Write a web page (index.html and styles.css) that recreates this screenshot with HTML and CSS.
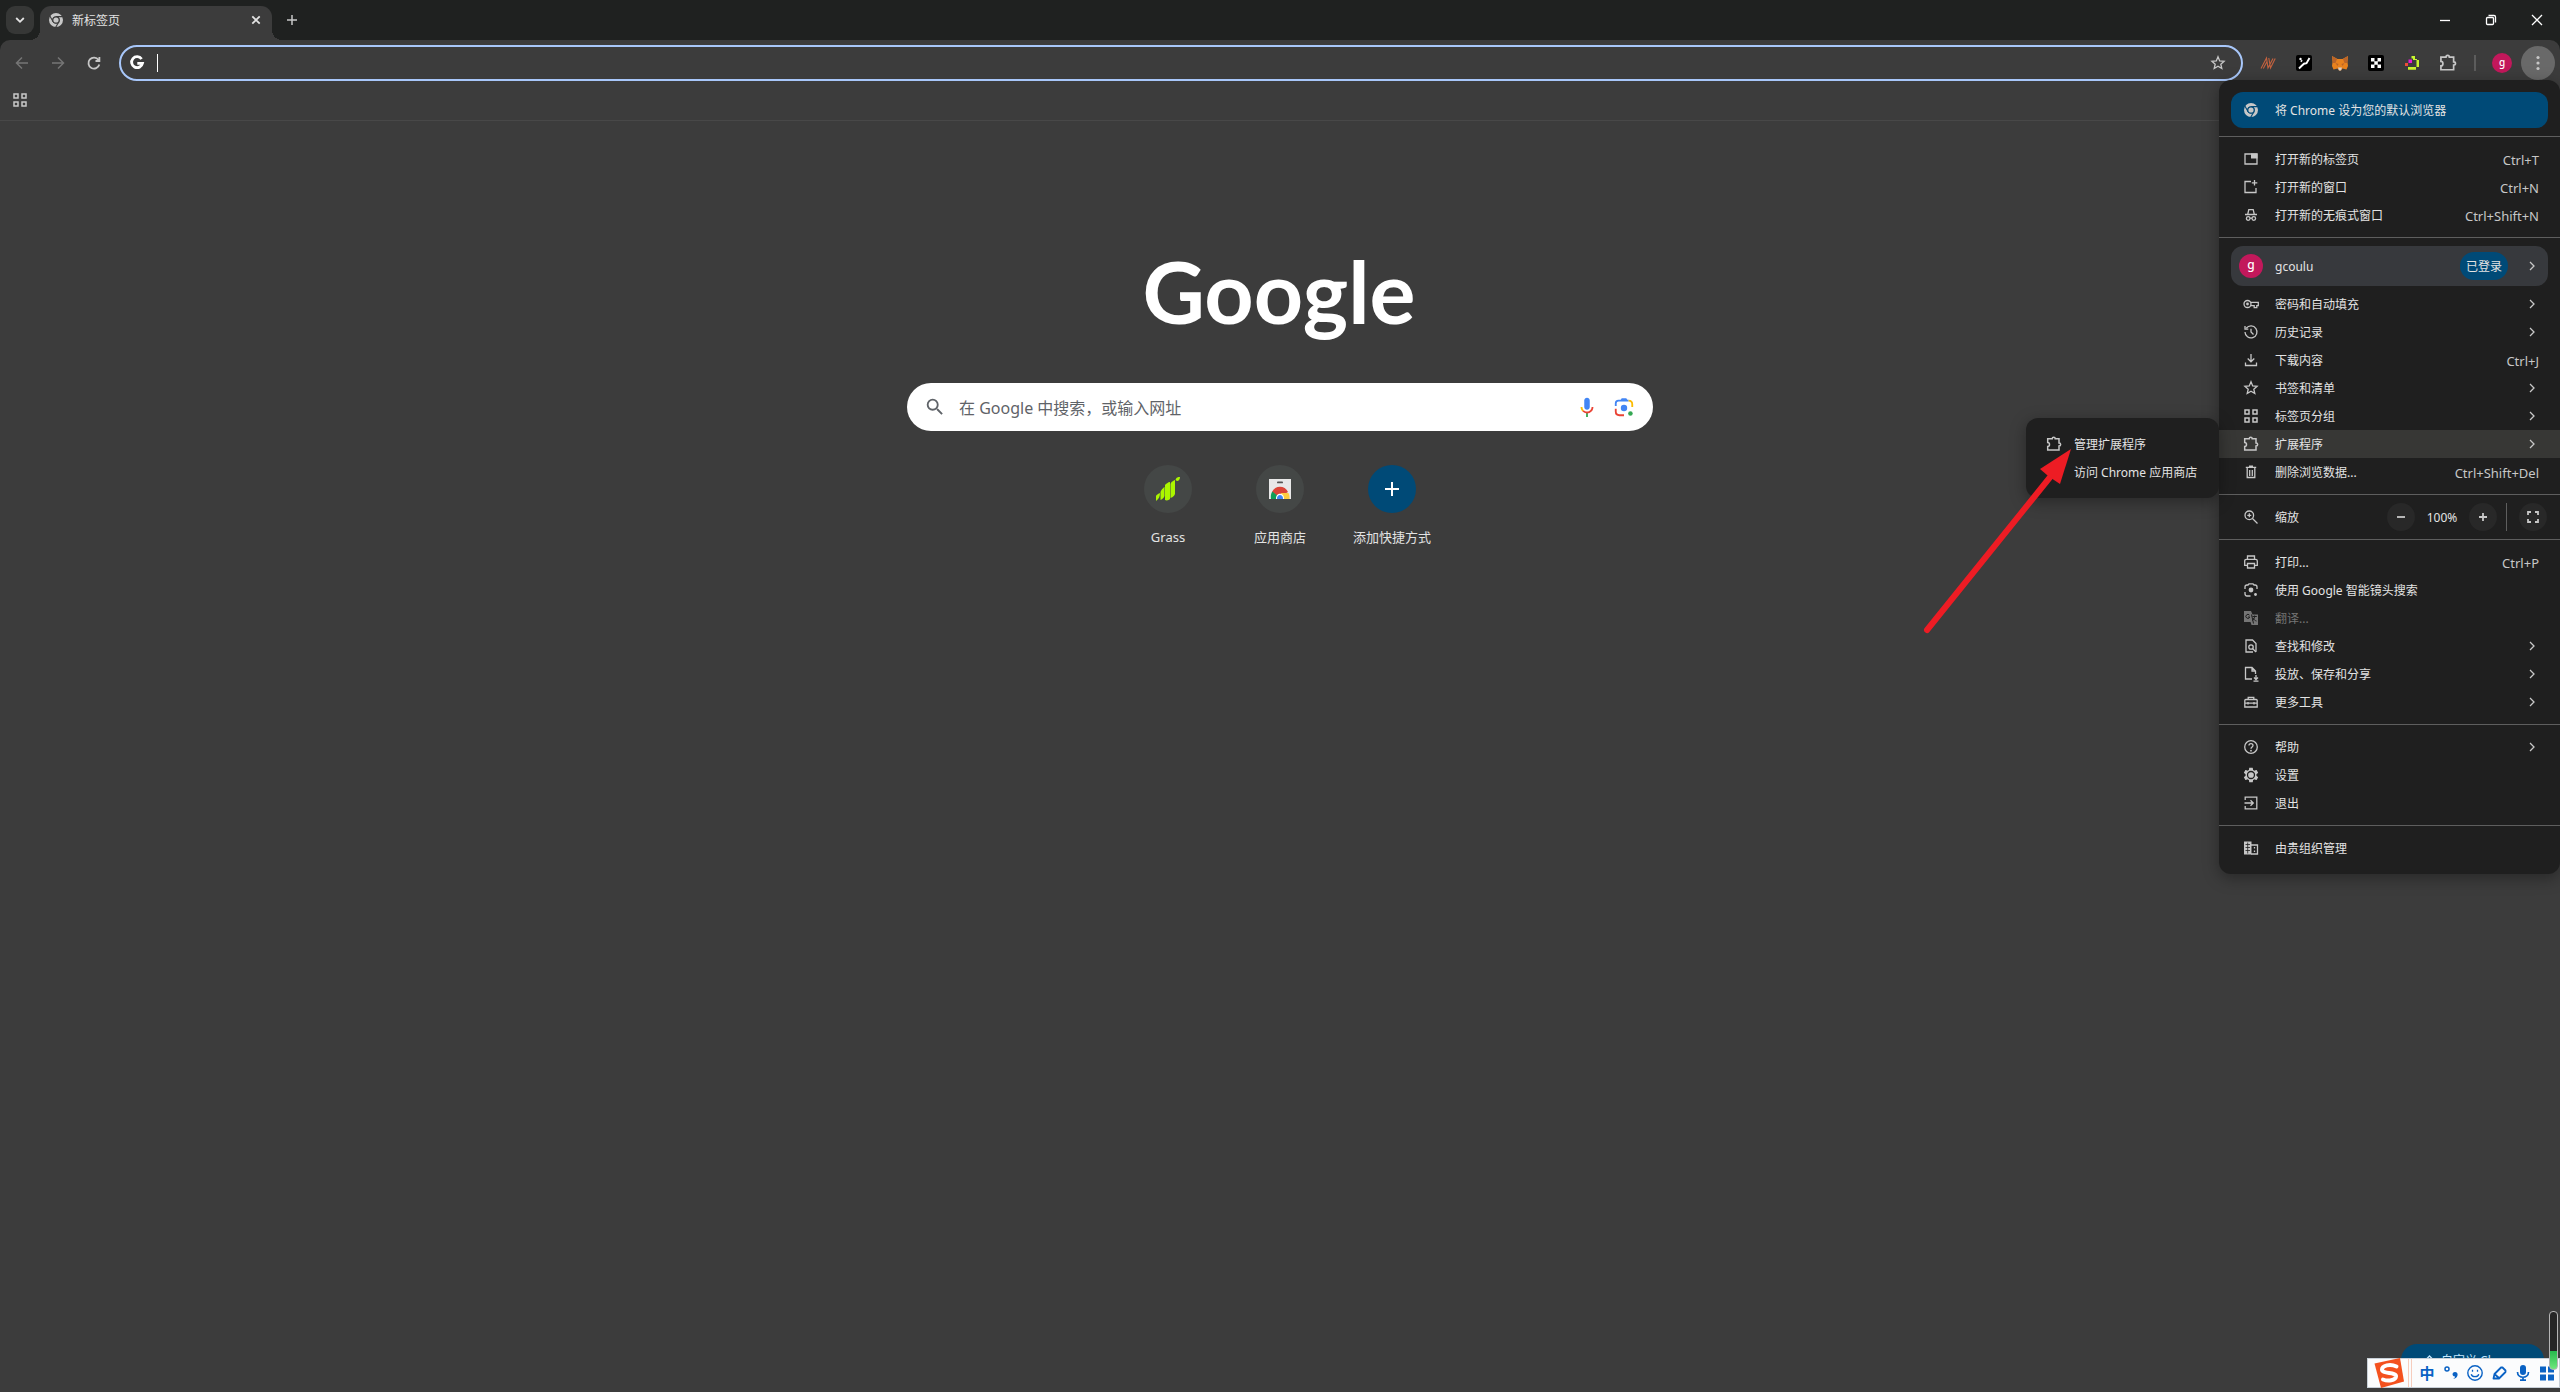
FILE: index.html
```html
<!DOCTYPE html>
<html lang="zh-CN">
<head>
<meta charset="utf-8">
<meta name="viewport" content="width=device-width, initial-scale=1">
<title>新标签页</title>
<link rel="stylesheet" href="styles.css">
</head>
<body>
<svg class="sprite" aria-hidden="true">
  <symbol id="chrome" viewBox="0 0 16 16"><circle cx="8" cy="8" r="5.3" fill="none" stroke="currentColor" stroke-width="3.4"/><g class="cut" fill="none" stroke-width="1.1"><circle cx="8" cy="8" r="3.3"/><path d="M8 4.6h7M10.9 9.7 7.4 15.8M5.1 9.7 1.6 3.6"/></g><circle cx="8" cy="8" r="2.6" fill="currentColor"/></symbol>
  <symbol id="chev" viewBox="0 0 16 16"><path class="ln" d="m6 4 4 4-4 4"/></symbol>
  <symbol id="puzzle" viewBox="0 0 16 16"><path class="ln mid" d="M1.700 2.800h4.500c0-2.200 3-2.200 3 0H13v4.200c2.200 0 2.200 2.900 0 2.900V14H1.700v-3.400c2.400 0 2.400-4 0-4z"/></symbol>
  <symbol id="star" viewBox="0 0 16 16"><path class="ln" d="m8 1.8 1.7 4.1 4.4.4-3.3 2.9 1 4.3L8 11.2l-3.8 2.3 1-4.3-3.3-2.9 4.4-.4z"/></symbol>
  <symbol id="grid" viewBox="0 0 16 16"><path class="ln mid" d="M2 2h4v4H2zM10 2h4v4h-4zM2 10h4v4H2zM10 10h4v4h-4z"/></symbol>
  <symbol id="tab" viewBox="0 0 16 16"><path class="ln" d="M2 3h12v10H2z"/><path fill="currentColor" d="M8 2.5h6.500v5H8z"/></symbol>
  <symbol id="window" viewBox="0 0 16 16"><path class="ln" d="M8 2.500H2v11h11V9M11.500 1v5.500M8.800 3.800h5.500"/></symbol>
  <symbol id="incog" viewBox="0 0 16 16"><path class="ln" d="M2 7.500h12M4.800 7 5.800 2.700h4.400L11.200 7M7 11.200h2"/><circle class="ln" cx="5.200" cy="11.500" r="1.800"/><circle class="ln" cx="10.800" cy="11.500" r="1.800"/></symbol>
  <symbol id="key" viewBox="0 0 16 16"><circle class="ln" cx="4.500" cy="8" r="3.500"/><circle cx="4.500" cy="8" r="1.400" fill="currentColor"/><path class="ln" d="M8 6.400h7.300v3.200h-1.500v2h-2.600v-2H8"/></symbol>
  <symbol id="history" viewBox="0 0 16 16"><path class="ln" d="M2 8a6 6 0 1 0 1.300-3.800M2 2v3.200h3.300M8 4.800V8l2.500 2.500"/></symbol>
  <symbol id="download" viewBox="0 0 16 16"><path class="ln" d="M8 2v7.500M4.700 6.500 8 9.800l3.300-3.300M2.500 10.500v3h11v-3"/></symbol>
  <symbol id="trash" viewBox="0 0 16 16"><path class="ln" d="M4.200 4v9.500h7.600V4M2.800 3.300h10.400M6 2.200h4M6.700 6v6M9.300 6v6"/></symbol>
  <symbol id="zoom" viewBox="0 0 16 16"><circle class="ln" cx="6.300" cy="6.300" r="4.300"/><path class="ln" d="m9.500 9.500 5 5M4.300 6.300h4M6.300 4.300v4"/></symbol>
  <symbol id="full" viewBox="0 0 16 16"><path class="ln thick" d="M3 6V3h3M10 3h3v3M13 10v3h-3M6 13H3v-3"/></symbol>
  <symbol id="print" viewBox="0 0 16 16"><path class="ln" d="M4.500 5V2h7v3M4 11.300H1.700V7q0-1.700 1.700-1.700h9.200q1.700 0 1.700 1.700v4.300H12M4.500 9.500h7V14h-7z"/></symbol>
  <symbol id="lens" viewBox="0 0 16 16"><path class="ln" d="M2 7V5q0-2 2-2h1l1-1.200h4L11 3h1q2 0 2 2v2M2 10v1.500q0 2.500 2 2.500h3.500"/><circle cx="8" cy="8" r="2.400" fill="currentColor"/><circle cx="12.500" cy="12.500" r="1.400" fill="currentColor"/></symbol>
  <symbol id="translate" viewBox="0 0 16 16"><path fill="currentColor" d="M1 1h7l1.500 3.500H15v10.500H8.500L7.500 12H1z"/><path class="cut" fill="none" d="M6.500 5.200a2 2 0 1 0 .3 1.800H5M9.500 6.500h4.300M11.600 5.500v1c0 2-1.500 3.500-2.500 4M10 8c.8 1.700 2 2.600 3.500 3M8.500 4.500l2 9"/></symbol>
  <symbol id="find" viewBox="0 0 16 16"><path class="ln" d="M13 13.800V5.500L9.500 2H3v12h7"/><circle class="ln" cx="8" cy="9" r="2.200"/><path class="ln" d="m9.500 10.500 3.500 3.500"/></symbol>
  <symbol id="cast" viewBox="0 0 16 16"><path class="ln" d="M9 13H2.500V1.500H9L12.500 5v3M9 1.500V5h3.500M13 9v4M11 11.500l2 2 2-2M10.500 15.200h5"/></symbol>
  <symbol id="tools" viewBox="0 0 16 16"><path class="ln" d="M1.800 13V6.500q0-1 1-1h10.400q1 0 1 1V13zM5.200 5.500V3.300h5.600v2.200M1.800 9.200h12.400M5 8v2.500M11 8v2.500"/></symbol>
  <symbol id="help" viewBox="0 0 16 16"><circle class="ln" cx="8" cy="8" r="6.300"/><path class="ln" d="M6 6.500c0-2.600 4-2.500 4 0 0 1.500-2 1.500-2 3.300"/><circle cx="8" cy="11.700" r=".9" fill="currentColor"/></symbol>
  <symbol id="gear" viewBox="1 1 22 22"><path fill="currentColor" d="M19.430 12.980c.04-.32.07-.64.07-.98s-.03-.66-.07-.98l2.110-1.650c.19-.15.24-.42.12-.64l-2-3.460c-.12-.22-.39-.3-.61-.22l-2.490 1c-.52-.4-1.080-.73-1.690-.98l-.38-2.650A.488.488 0 0 0 14 2h-4c-.25 0-.46.18-.49.42l-.38 2.650c-.61.25-1.170.59-1.690.98l-2.490-1c-.23-.09-.49 0-.61.22l-2 3.460c-.13.22-.07.49.12.64l2.110 1.650c-.04.32-.07.65-.07.98s.03.66.07.98l-2.110 1.650c-.19.15-.24.42-.12.64l2 3.460c.12.22.39.3.61.22l2.490-1c.52.4 1.080.73 1.690.98l.38 2.650c.03.24.24.42.49.42h4c.25 0 .46-.18.49-.42l.38-2.650c.61-.25 1.170-.59 1.690-.98l2.490 1c.23.09.49 0 .61-.22l2-3.460c.12-.22.07-.49-.12-.64z"/><circle class="cut" cx="12" cy="12" r="4.800" fill="none" stroke-width="1.800"/></symbol>
  <symbol id="exit" viewBox="0 0 16 16"><path class="ln" d="M2.200 5V2.200h11.600v11.600H2.200V11M1.500 8h8.500M7.500 5.200 10.300 8l-2.800 2.800"/></symbol>
  <symbol id="org" viewBox="0 0 16 16"><path fill="currentColor" d="M1 1.500h7.500v13H1z"/><path class="ln" d="M8 5h6.500v9H8M11.500 7v1.500M11.500 10.500V12"/><path class="cut" fill="none" stroke-width=".8" d="M2.500 4.500H7M2.500 7.500H7M2.500 10.500H7M4.700 2.500v11"/></symbol>
</svg>

<header class="browser">
  <div class="tabstrip">
    <button class="tab-search" aria-label="搜索标签页"><svg viewBox="0 0 16 16"><path class="ln thick" d="m4.200 6 3.800 3.800L11.800 6"/></svg></button>
    <div class="tab">
      <svg class="on-bar"><use href="#chrome"/></svg>
      <span class="tab-title">新标签页</span>
      <button class="plain" aria-label="关闭标签页"><svg viewBox="0 0 16 16"><path class="ln thick" d="m4.300 4.300 7.400 7.400m0-7.400-7.400 7.400"/></svg></button>
    </div>
    <button class="plain new-tab" aria-label="新标签页"><svg viewBox="0 0 16 16"><path class="ln mid" d="M8 3v10M3 8h10"/></svg></button>
    <div class="window-controls">
      <button aria-label="最小化"><svg viewBox="0 0 16 16"><path class="ln" d="M3 8.500h10"/></svg></button>
      <button aria-label="还原"><svg viewBox="0 0 16 16"><rect class="ln" x="3.500" y="5.500" width="7" height="7" rx="1"/><path class="ln" d="M5.500 3.500H11q1.500 0 1.500 1.500v5.500"/></svg></button>
      <button aria-label="关闭"><svg viewBox="0 0 16 16"><path class="ln" d="m3 3 10 10m0-10L3 13"/></svg></button>
    </div>
  </div>

  <div class="toolbar">
    <nav class="nav" aria-label="导航">
      <button class="off" aria-label="后退"><svg viewBox="0 0 16 16"><path class="ln mid" d="M14 8H2.500M8 2.500 2.500 8 8 13.500"/></svg></button>
      <button class="off" aria-label="前进"><svg viewBox="0 0 16 16"><path class="ln mid" d="M2 8h11.500M8 2.500 13.500 8 8 13.500"/></svg></button>
      <button aria-label="重新加载"><svg viewBox="0 0 16 16"><path class="ln thick" d="M13.300 9.500A5.500 5.500 0 1 1 12.500 5M13.400 2v4H9.500"/></svg></button>
    </nav>
    <div class="omnibox">
      <svg class="g" viewBox="0 0 16 16"><path fill="none" stroke="currentColor" stroke-width="2.800" d="M12.600 4A5.500 5.500 0 1 0 13.500 8.300H8.300"/></svg>
      <i class="caret"></i>
      <input type="text" aria-label="地址和搜索栏">
      <button class="plain" aria-label="为此标签页添加书签"><svg><use href="#star"/></svg></button>
    </div>
    <div class="extensions">
      <button aria-label="扩展 N"><svg viewBox="0 0 16 16"><path fill="none" stroke="#c4623f" stroke-width="1.100" d="M1 13.500 6.500 3 8 13 13 3.500M3.300 13.500 7 6.500M8.800 3l1.700 10L15.200 3.500"/></svg></button>
      <button aria-label="扩展 Y"><svg viewBox="0 0 16 16"><rect width="16" height="16" rx="2"/><path fill="none" stroke="#fff" stroke-width="1.900" d="M3 13.500 5.500 11 8 8.700l2.500-.5L13.500 3M5 5.500l1 1"/><circle cx="4.500" cy="4" r="1.200" fill="#fff"/></svg></button>
      <button aria-label="MetaMask"><svg viewBox="0 0 16 16"><path fill="#e8821e" d="m0 1 5.500 3h5L16 1l-.5 6 .5 4-1.500 3.500-4-1L9 15.500H7l-1.500-2-4 1L0 11l.5-4z"/><path fill="#b9642a" d="m0 1 5 3-1.500 4H1zm16 0-5 3 1.500 4H15zM3.500 8l3 1-1 2zm9 0-3 1 1 2z"/><path fill="#d7cfc9" d="M6 12.500h4L9 15.500H7z"/></svg></button>
      <button aria-label="OKX"><svg viewBox="0 0 16 16"><rect width="16" height="16" rx="2"/><path fill="#fff" d="M3 3h3.500v3.500H3zM9.500 3H13v3.500H9.500zM6.300 6.300h3.500v3.500H6.300zM3 9.500h3.500V13H3zM9.500 9.500H13V13H9.500z"/></svg></button>
      <button aria-label="扩展 Q"><svg viewBox="0 0 16 16"><path fill="#c8f52e" d="M7.500 1H11v3h2v1h2v7h-2.500V5H9V3.500H7.500zM4 12h8v2.800H4z"/><path fill="#e617d9" d="M4.500 4.500H8V8H4.500z"/><path fill="#ef4a38" d="M1 8h3v3H1z"/></svg></button>
      <button aria-label="扩展程序"><svg class="large"><use href="#puzzle"/></svg></button>
    </div>
    <button class="avatar" aria-label="个人资料">g</button>
    <button class="more" aria-label="自定义及控制"><svg viewBox="0 0 16 16" fill="currentColor"><circle cx="8" cy="2.500" r="1.600"/><circle cx="8" cy="8" r="1.600"/><circle cx="8" cy="13.500" r="1.600"/></svg></button>

    <div class="menu" role="menu">
      <button class="default"><svg><use href="#chrome"/></svg><span>将 Chrome 设为您的默认浏览器</span></button>
      <hr>
      <button class="item"><svg><use href="#tab"/></svg><span>打开新的标签页</span><kbd>Ctrl+T</kbd></button>
      <button class="item"><svg><use href="#window"/></svg><span>打开新的窗口</span><kbd>Ctrl+N</kbd></button>
      <button class="item"><svg><use href="#incog"/></svg><span>打开新的无痕式窗口</span><kbd>Ctrl+Shift+N</kbd></button>
      <hr>
      <button class="profile"><b class="avatar big">g</b><span>gcoulu</span><em>已登录</em><svg><use href="#chev"/></svg></button>
      <button class="item"><svg><use href="#key"/></svg><span>密码和自动填充</span><svg><use href="#chev"/></svg></button>
      <button class="item"><svg><use href="#history"/></svg><span>历史记录</span><svg><use href="#chev"/></svg></button>
      <button class="item"><svg><use href="#download"/></svg><span>下载内容</span><kbd>Ctrl+J</kbd></button>
      <button class="item"><svg><use href="#star"/></svg><span>书签和清单</span><svg><use href="#chev"/></svg></button>
      <button class="item"><svg><use href="#grid"/></svg><span>标签页分组</span><svg><use href="#chev"/></svg></button>
      <div class="has-sub">
        <button class="item active"><svg><use href="#puzzle"/></svg><span>扩展程序</span><svg><use href="#chev"/></svg></button>
        <div class="submenu" role="menu">
          <button class="item"><svg><use href="#puzzle"/></svg><span>管理扩展程序</span></button>
          <button class="item"><svg></svg><span>访问 Chrome 应用商店</span></button>
          <svg class="arrow" viewBox="0 0 160 190" aria-hidden="true"><path d="M10 184 134 30" fill="none" stroke="#ed1c24" stroke-width="6" stroke-linecap="round"/><path fill="#ed1c24" d="m154 3-31 20 7 6 7 5 6 4z"/></svg>
        </div>
      </div>
      <button class="item"><svg><use href="#trash"/></svg><span>删除浏览数据...</span><kbd>Ctrl+Shift+Del</kbd></button>
      <hr>
      <div class="item zoom-row"><svg><use href="#zoom"/></svg><span>缩放</span>
        <button class="round" aria-label="缩小"><svg viewBox="0 0 16 16"><path class="ln thick" d="M4 8h8"/></svg></button>
        <output>100%</output>
        <button class="round" aria-label="放大"><svg viewBox="0 0 16 16"><path class="ln thick" d="M4 8h8M8 4v8"/></svg></button>
        <i class="rule"></i>
        <button class="round" aria-label="全屏"><svg><use href="#full"/></svg></button>
      </div>
      <hr>
      <button class="item"><svg><use href="#print"/></svg><span>打印...</span><kbd>Ctrl+P</kbd></button>
      <button class="item"><svg><use href="#lens"/></svg><span>使用 Google 智能镜头搜索</span></button>
      <button class="item" disabled><svg><use href="#translate"/></svg><span>翻译...</span></button>
      <button class="item"><svg><use href="#find"/></svg><span>查找和修改</span><svg><use href="#chev"/></svg></button>
      <button class="item"><svg><use href="#cast"/></svg><span>投放、保存和分享</span><svg><use href="#chev"/></svg></button>
      <button class="item"><svg><use href="#tools"/></svg><span>更多工具</span><svg><use href="#chev"/></svg></button>
      <hr>
      <button class="item"><svg><use href="#help"/></svg><span>帮助</span><svg><use href="#chev"/></svg></button>
      <button class="item"><svg><use href="#gear"/></svg><span>设置</span></button>
      <button class="item"><svg><use href="#exit"/></svg><span>退出</span></button>
      <hr>
      <button class="item"><svg><use href="#org"/></svg><span>由贵组织管理</span></button>
    </div>
  </div>

  <div class="bookmarks"><button class="plain" aria-label="标签页分组"><svg><use href="#grid"/></svg></button></div>
</header>

<main>
  <svg class="logo" viewBox="0 0 272 92" role="img" aria-label="Google"><text x="135" y="73" text-anchor="middle">Google</text></svg>
  <form class="search" role="search">
    <svg class="glass" viewBox="0 0 24 24"><path fill="currentColor" d="M15.500 14h-.79l-.28-.27A6.471 6.471 0 0 0 16 9.500 6.500 6.500 0 1 0 9.500 16c1.610 0 3.090-.59 4.230-1.570l.27.28v.79l5 4.990L20.490 19l-4.990-5zm-6 0C7.010 14 5 11.990 5 9.500S7.010 5 9.500 5 14 7.010 14 9.500 11.990 14 9.500 14z"/></svg>
    <input type="text" aria-label="搜索" placeholder="在 Google 中搜索，或输入网址">
    <button type="button" aria-label="语音搜索"><svg viewBox="0 0 24 24"><path fill="#4285f4" d="M12 15c1.660 0 3-1.300 3-3V5c0-1.700-1.300-3-3-3S9 3.300 9 5v7c0 1.700 1.300 3 3 3z"/><path fill="#34a853" d="M11 18.500h2V23h-2z"/><path fill="#fbbc04" d="M7 12H5c0 2 .8 3.700 2 5l1.400-1.400A5 5 0 0 1 7 12z"/><path fill="#ea4335" d="M12 17c-1.400 0-2.700-.6-3.600-1.500L7 17a7 7 0 0 0 5 2c4 0 7-3 7-7h-2c0 2.700-2.200 5-5 5z"/></svg></button>
    <button type="button" aria-label="按图搜索"><svg viewBox="0 0 24 24" fill="none" stroke-width="2"><path stroke="#4285f4" d="M3 11V8q0-3 3-3h11"/><path fill="#4285f4" d="m8 5 1.500-2.500h5L16 5z"/><path stroke="#fbbc04" d="M17 5q4 0 4 4v3"/><path stroke="#ea4335" d="M3 14v3q0 4 4 4h5"/><circle cx="12" cy="13" r="3.500" fill="#4285f4"/><circle cx="19" cy="19" r="2.500" fill="#34a853"/></svg></button>
  </form>
  <nav class="tiles" aria-label="快捷方式">
    <a href="#grass"><i class="disc"><svg viewBox="0 0 24 24" fill="#abf600"><path d="M0 19c1-2 4-3 4-3 0 3-1 6-4 8zM4.500 15c1-3 4-5 4-5v9c-1 3-4 4-4 4zM9 8c1-1 3-3 5-3v17c-1 1-3 2-5 1zM14.500 7c1-3 4.500-4 4.500-4v14c-1 3-4.500 4-4.500 4zM19.500 3c1-3 2.500-3 4.500-3 0 2-1 4-3 4z"/></svg></i>Grass</a>
    <a href="#store"><i class="disc"><svg viewBox="0 0 24 24"><path fill="#e8e8e8" d="M1 2h22v20H1z"/><rect x="9" y="4.500" width="6" height="1.800" rx=".9" fill="#555"/><path fill="#db4437" d="M4 15c3-7 13-7 16 0l-5 3H8z"/><path fill="#0f9d58" d="M4.300 14.500C3 16 2.500 19 3 22h6l1-3z"/><path fill="#ffcd40" d="M13 16h7.500c1 2 1.200 4 1 6H14z"/><path fill="#fff" d="M8 22c-.5-7 8.500-7 8 0z"/><path fill="#4285f4" d="M9 22c-.5-5.500 6.500-5.500 6 0z"/></svg></i>应用商店</a>
    <a href="#add"><i class="disc add"><svg viewBox="0 0 24 24"><path fill="none" stroke="#fff" stroke-width="2" d="M12 5v14M5 12h14"/></svg></i>添加快捷方式</a>
  </nav>
</main>

<button class="customize"><svg viewBox="0 0 16 16"><path class="ln" d="m2.500 13.500.5-3L10.500 3l2.500 2.500L5.500 13z"/></svg>自定义 Chrome</button>
<aside class="ime" aria-label="输入法">
  <svg class="sogou" viewBox="0 0 32 30"><path fill="#f4511e" d="M1.500 5.500 27 0l4 23.500L8 30z"/><path fill="none" stroke="#fff" stroke-width="4" stroke-linecap="round" d="M23.500 8.500C17 5.500 9 7.500 9 11.500c0 5 14.500 2 14 7-.5 4-8 5-13 3"/></svg>
  <i class="bars"></i>
  <button>中</button>
  <button aria-label="标点"><svg viewBox="0 0 16 16"><circle cx="4" cy="4" r="2" fill="none" stroke="currentColor" stroke-width="1.500"/><path fill="currentColor" d="M10 14c2-1 2-2 2-2.500-3 .3-3.500-4.500 0-4.500 4 0 3.500 6.500-2 7z"/></svg></button>
  <button aria-label="表情"><svg viewBox="0 0 16 16"><circle cx="8" cy="8" r="7.200" fill="none" stroke="currentColor" stroke-width="1.400"/><path fill="none" stroke="currentColor" stroke-width="1.300" d="M5.500 4.800v2M10.500 4.800v2M4.200 9.200c1 3.300 6.600 3.300 7.600 0"/></svg></button>
  <button aria-label="手写"><svg viewBox="0 0 16 16"><path fill="none" stroke="currentColor" stroke-width="1.800" stroke-linejoin="round" d="M2.500 13.500 3.500 9 10 2.500h1.500l3 3V7L8 13.500zM4 9.500l4 3.500"/></svg></button>
  <button aria-label="语音"><svg viewBox="0 0 16 16"><rect x="5" y="0" width="6" height="10" rx="3" fill="currentColor"/><path fill="none" stroke="currentColor" stroke-width="1.700" d="M2.500 7c0 7 11 7 11 0M8 12v3M5 15.200h6"/></svg></button>
  <button aria-label="工具箱"><svg viewBox="0 0 16 16"><path fill="currentColor" d="M1 1.500h6v6H1zM9 1.500h6v6H9zM1 9.500h6v6H1zM9 9.500h6v6H9z"/></svg></button>
</aside>
<div class="meter" aria-hidden="true"></div>
</body>
</html>
```
FILE: styles.css
```css
:root {
  --bar: #3c3c3c;
  --strip: #1f2120;
  --panel: #1f1f1f;
  --blue: #004a77;
  --cut: #1f1f1f;
}
* { box-sizing: border-box; }
body {
  position: relative;
  margin: 0;
  min-height: 100vh;
  overflow: hidden;
  background: var(--bar);
  color: #e3e3e3;
  font: 12px/16px "Noto Sans", "Noto Sans CJK SC", sans-serif;
}
button, input {
  font: inherit;
  color: inherit;
  background: none;
  border: 0;
  padding: 0;
  margin: 0;
  outline: 0;
}
button, kbd { white-space: nowrap; }
svg { display: block; flex: none; width: 16px; height: 16px; }
.sprite { position: absolute; width: 0; height: 0; }
.ln { fill: none; stroke: currentColor; stroke-width: 1.3; }
.mid { stroke-width: 1.5; }
.thick { stroke-width: 1.8; }
.cut { stroke: var(--cut); }

/* Tab strip */
.tabstrip {
  display: flex;
  align-items: center;
  height: 40px;
  padding-left: 6px;
  background: var(--strip);
}
.tab-search {
  display: grid;
  place-items: center;
  width: 28px;
  height: 28px;
  margin-right: 6px;
  border-radius: 9px;
  background: #363736;
}
.tab {
  --cut: #3c3c3c;
  position: relative;
  align-self: flex-end;
  display: flex;
  align-items: center;
  gap: 8px;
  width: 232px;
  height: 34px;
  padding: 0 8px 6px;
  border-radius: 11px 11px 0 0;
  background: var(--bar);
}
.tab::before, .tab::after {
  content: "";
  position: absolute;
  bottom: 0;
  width: 10px;
  height: 10px;
}
.tab::before { right: 100%; background: radial-gradient(circle at 0 0, transparent 10px, var(--bar) 10px); }
.tab::after { left: 100%; background: radial-gradient(circle at 100% 0, transparent 10px, var(--bar) 10px); }
.tab-title { flex: 1; padding-top: 2px; }
.on-bar { color: #c7c7c7; }
.new-tab { margin-left: 12px; color: #c7c7c7; }
.window-controls { display: flex; margin-left: auto; color: #fff; }
.window-controls button { display: grid; place-items: center; width: 46px; height: 40px; }

/* Toolbar */
.browser { background: var(--strip); }
.toolbar {
  position: relative;
  display: flex;
  align-items: center;
  height: 46px;
  padding-right: 5px;
  border-radius: 10px 10px 0 0;
  background: var(--bar);
  color: #c7c7c7;
}
.nav { display: flex; padding: 0 7px 0 4px; }
.nav button, .extensions button { display: grid; place-items: center; width: 36px; height: 36px; }
.nav .off { color: #757575; }
.omnibox {
  flex: 1;
  display: flex;
  align-items: center;
  height: 36px;
  padding: 0 15px 0 8px;
  border: 2px solid #a8c7fa;
  border-radius: 18px;
}
.omnibox input { flex: 1; min-width: 0; height: 28px; }
.g { width: 16px; height: 16px; color: #fff; }
.caret { width: 1px; height: 18px; margin-left: 12px; background: #fff; }
.extensions { display: flex; padding: 0 9px 0 7px; }
.extensions .large { width: 18px; height: 18px; }
.extensions::after {
  content: "";
  align-self: center;
  width: 2px;
  height: 16px;
  margin-left: 8px;
  background: #5c5c5c;
}
.avatar {
  display: grid;
  place-items: center;
  width: 20px;
  height: 20px;
  margin: 0 9px 0 7px;
  padding-bottom: 2px;
  border-radius: 50%;
  background: #c2185b;
  color: #fff;
  font-size: 10px;
  font-weight: 500;
}
.more { display: grid; place-items: center; width: 34px; height: 34px; border-radius: 50%; background: #696969; }
.bookmarks {
  display: flex;
  align-items: center;
  height: 35px;
  padding: 0 12px 6px;
  border-bottom: 1px solid #484848;
  background: var(--bar);
  color: #c7c7c7;
}

/* Application menu */
.menu, .submenu {
  position: absolute;
  z-index: 2;
  padding: 12px 0;
  border-radius: 12px;
  background: var(--panel);
  box-shadow: 0 4px 16px rgba(0, 0, 0, .35);
  color: #e3e3e3;
}
.menu { top: 40px; right: 0; width: 341px; }
.menu hr { margin: 8px 0; border: 0; border-top: 1px solid #5e5e5e; }
.menu span, .menu kbd, .menu output { padding-top: 2px; }
.default, .profile {
  display: flex;
  align-items: center;
  width: calc(100% - 24px);
  margin: 0 12px;
  border-radius: 12px;
}
.default { --cut: #004a77; gap: 16px; height: 36px; padding: 0 12px; background: var(--blue); }
.profile { height: 40px; margin-bottom: 4px; padding: 0 8px; background: #37393d; text-align: left; }
.profile span { flex: 1; }
.profile em {
  margin-right: 16px;
  padding: 7px 6px 5px;
  border-radius: 14px;
  background: var(--blue);
  font-style: normal;
}
.avatar.big { width: 24px; height: 24px; margin: 0 12px 0 0; font-size: 12px; }
.item {
  display: flex;
  align-items: center;
  gap: 16px;
  width: 100%;
  height: 28px;
  padding: 0 20px 0 24px;
  text-align: left;
}
.item span { flex: 1; }
.item svg, .default svg, .profile svg { color: #c7c7c7; }
.item:disabled, .item:disabled svg { color: #757575; }
.item kbd { padding-right: 1px; font: inherit; font-size: 13px; color: #c7c7c7; }
.active { background: #373735; }
.has-sub { position: relative; }
.submenu { top: -12px; right: 100%; width: 193px; }
.submenu .item { gap: 12px; padding: 0 0 0 20px; }
.submenu .arrow { position: absolute; top: 28px; right: 142px; width: 160px; height: 190px; }
.zoom-row { gap: 0; padding-right: 13px; }
.zoom-row > span { padding-left: 16px; }
.zoom-row output { width: 54px; text-align: center; }
.round { display: grid; place-items: center; width: 28px; height: 28px; border-radius: 50%; background: #282828; }
.rule { width: 1px; height: 28px; margin: 0 12px 0 9px; background: #5e5e5e; }

/* New tab page */
main { display: flex; flex-direction: column; align-items: center; padding-top: 130px; }
.logo { width: 272px; height: 92px; overflow: visible; }
.logo text { font: 700 86px Lato, sans-serif; fill: #fff; }
.search {
  display: flex;
  align-items: center;
  width: 746px;
  max-width: 100%;
  height: 48px;
  margin: 40px 0 34px;
  padding: 0 18px 0 17px;
  border-radius: 24px;
  background: #fff;
  color: #5f6368;
  font-size: 16px;
}
.search input { flex: 1; min-width: 0; height: 24px; margin-left: 13px; padding-top: 2px; }
.search input::placeholder { color: #5f6368; opacity: 1; }
.search button { margin-left: 15px; }
.search svg { width: 22px; height: 22px; }
.tiles { display: flex; }
.tiles a {
  display: flex;
  flex-direction: column;
  align-items: center;
  gap: 16px;
  width: 112px;
  color: inherit;
  font-size: 13px;
  text-decoration: none;
}
.disc { display: grid; place-items: center; width: 48px; height: 48px; border-radius: 50%; background: #444746; }
.disc svg { width: 24px; height: 24px; }
.disc.add { background: var(--blue); }

/* Floating corner */
.customize {
  position: absolute;
  right: 16px;
  bottom: 16px;
  display: flex;
  align-items: center;
  gap: 6px;
  width: 143px;
  height: 32px;
  padding: 1px 18px 0;
  border-radius: 16px;
  background: var(--blue);
  color: #c2e7ff;
}
.ime {
  position: absolute;
  right: 0;
  bottom: 4px;
  display: flex;
  align-items: center;
  width: 193px;
  height: 30px;
  padding-left: 5px;
  border: 1px solid #c8d0d8;
  background: #fbfcfd;
  color: #0a62c4;
}
.ime button { width: 24px; font-size: 15px; font-weight: 700; }
.ime button svg { margin: auto; }
.sogou { width: 32px; height: 30px; }
.bars { width: 4px; height: 28px; margin: 0 3px; border: solid #f6cdbd; border-width: 0 1px; }
.meter {
  position: absolute;
  right: 2px;
  bottom: 22px;
  width: 9px;
  height: 59px;
  border: 1px solid #b5b5b5;
  border-radius: 4px;
  background: linear-gradient(#262626 68%, #25b84c 68%, #6fe77c);
}
```
